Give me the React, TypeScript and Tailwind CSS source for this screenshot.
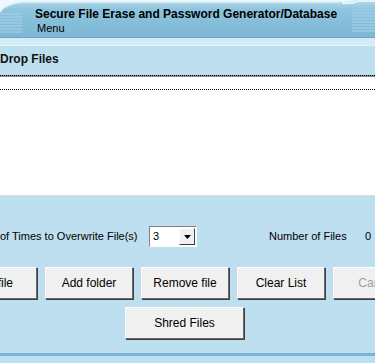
import React from "react";

const btn =
  "w-[88px] h-[32px] shrink-0 bg-[#f0f0f0] border border-t-white border-l-white border-r-[#6b6b6b] border-b-[#6b6b6b] shadow-[1px_1px_0_#3c3c3c] text-[12px] text-black flex items-center justify-center";

export default function App() {
  return (
    <div
      className="w-[375px] h-[363px] overflow-hidden bg-[#bddfef] flex flex-col"
      style={{ fontFamily: '"Liberation Sans", Arial, sans-serif' }}
    >
      {/* Skinned title bar */}
      <div className="relative h-[38px] shrink-0 bg-[#eef7fb]">
        <svg className="absolute inset-0" width="375" height="38" viewBox="0 0 375 38">
          <defs>
            <linearGradient id="hb" x1="0" y1="0" x2="0" y2="1">
              <stop offset="0" stopColor="#b7dbec" />
              <stop offset="0.25" stopColor="#8ec4de" />
              <stop offset="1" stopColor="#7cb7d4" />
            </linearGradient>
          </defs>
          <path d="M0 12 Q6 3 24 2 L340 2 Q352 2 356 0 L375 0 L375 38 L0 38 Z" fill="url(#hb)" />
          <path d="M0 12 Q6 3 24 2 L340 2" stroke="#dff0f8" strokeWidth="1.5" fill="none" />
          <path d="M342 3 Q352 4 358 1 L375 1" stroke="#e6f3f9" strokeWidth="2" fill="none" />
          {[14, 17, 20, 23, 26, 29, 32].map((y) => (
            <line key={"l" + y} x1="0" y1={y} x2="22" y2={y} stroke="#a9d3e7" strokeWidth="1" />
          ))}
          {[10, 13, 16, 19, 22, 25, 28, 31].map((y) => (
            <line key={"r" + y} x1="352" y1={y} x2="375" y2={y} stroke="#a9d3e7" strokeWidth="1" />
          ))}
          <line x1="0" y1="37.5" x2="375" y2="37.5" stroke="#6aa8c6" strokeWidth="1" />
        </svg>
        <div className="relative pl-[35px] pt-[8px] leading-none">
          <div className="text-[12px] font-bold text-black">
            Secure File Erase and Password Generator/Database
          </div>
          <div className="pl-[2px] pt-[3px] text-[11px] text-black">Menu</div>
        </div>
      </div>
      {/* light band */}
      <div className="h-[8px] shrink-0 bg-[#d5ebf5] border-b border-[#e4f2f9]" />
      {/* Drop files header */}
      <div className="h-[29px] shrink-0 flex items-center pb-[4px] text-[12px] font-bold text-[#111]">
        Drop Files
      </div>
      {/* dotted border */}
      <div className="h-[2px] shrink-0 bg-[#8a8a8a] border-t border-dotted border-black" />
      {/* list area */}
      <div className="h-[118px] shrink-0 bg-white">
        <div className="h-[12px]" />
        <div className="border-t border-dotted border-black" />
      </div>
      <div className="h-[1px] shrink-0 bg-[#dcdcdc]" />
      {/* bottom panel */}
      <div className="flex-1 flex flex-col">
        <div className="h-[30px]" />
        <div className="h-[21px] flex items-center text-[11px] text-black">
          <span className="w-[149px] shrink-0">of Times to Overwrite File(s)</span>
          <div className="w-[48px] h-[21px] bg-white border border-t-[#808080] border-l-[#808080] border-b-white border-r-white flex items-center">
            <span className="pl-[3px] flex-1">3</span>
            <div className="w-[16px] h-[17px] mr-[1px] bg-[#f0f0f0] border border-t-white border-l-white border-b-[#404040] border-r-[#404040] flex items-center justify-center">
              <svg width="7" height="4" viewBox="0 0 7 4">
                <path d="M0 0 H7 L3.5 4 Z" fill="#000" />
              </svg>
            </div>
          </div>
          <span className="ml-[72px] w-[96px] shrink-0">Number of Files</span>
          <span>0</span>
        </div>
        <div className="h-[20px]" />
        <div className="flex gap-[8px] ml-[-51px]">
          <div className={btn}>Add file</div>
          <div className={btn}>Add folder</div>
          <div className={btn}>Remove file</div>
          <div className={btn}>Clear List</div>
          <div className={btn + " !text-[#a0a0a0]"}>Cancel</div>
        </div>
        <div className="h-[8px]" />
        <div className="pl-[125px]">
          <div className={btn + " !w-[119px]"}>Shred Files</div>
        </div>
        <div className="h-[14px]" />
        <div className="h-[3px] bg-[#7ab4d2]" />
      </div>
    </div>
  );
}
